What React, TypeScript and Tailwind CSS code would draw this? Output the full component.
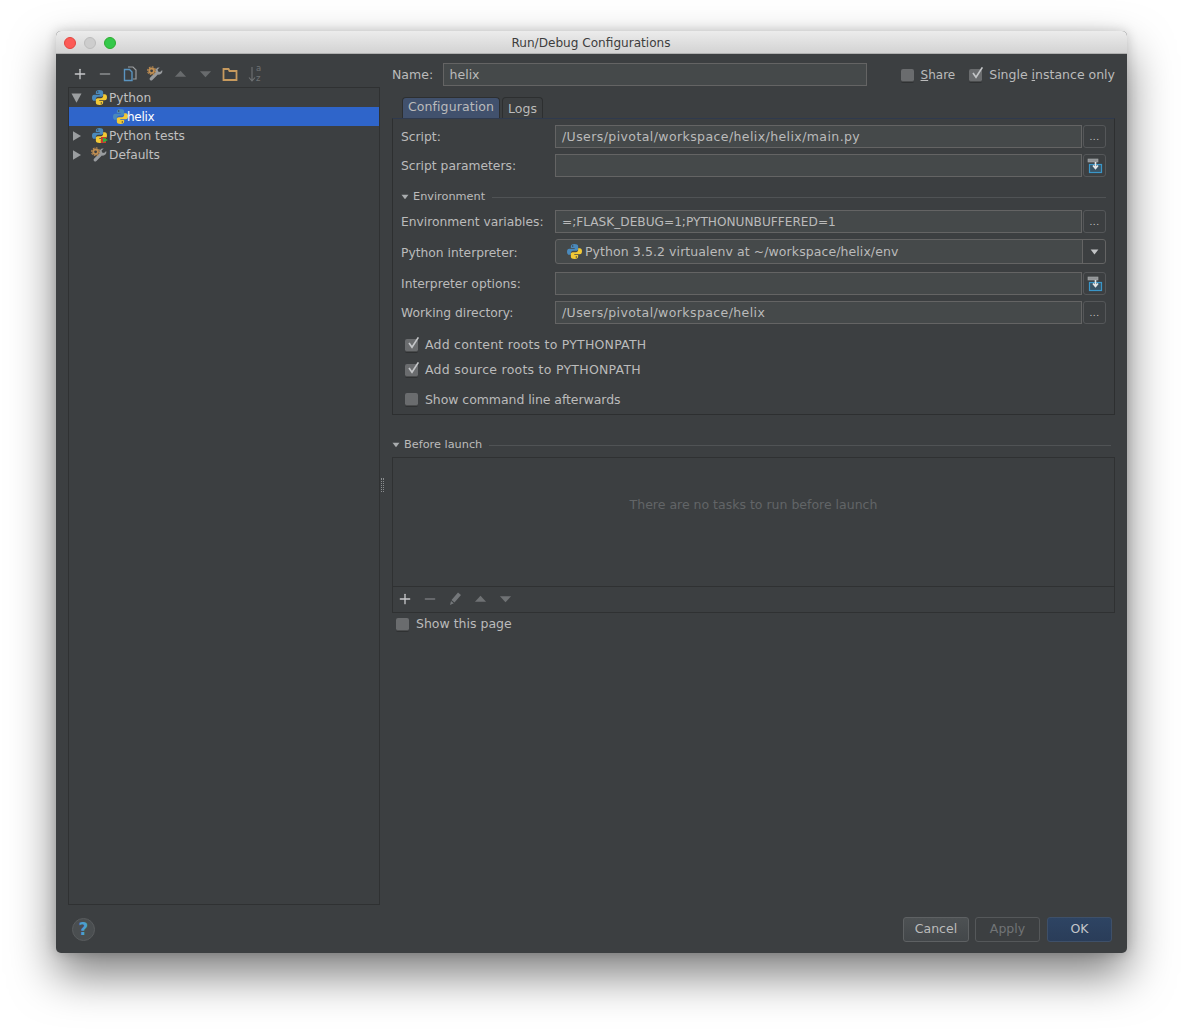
import type { ReactNode } from 'react'
import { Plus, Minus } from 'lucide-react'

const PythonIcon = ({ className = '' }: { className?: string }) => (
  <svg viewBox="1 1 14 14" className={`w-[15px] h-[15px] shrink-0 ${className}`}>
    <path
      d="M8 1C5.4 1 4.6 2 4.6 3.1v1.6h3.6v.7H3.1C1.7 5.4 1 6.4 1 8.2s.8 2.9 2.1 2.9h1.5V9.3c0-1.1.9-2 2-2h3c1.1 0 1.8-.7 1.8-1.7V3.1C11.400 1.800 10 1 8 1z"
      fill="#4a89bb"
    />
    <path
      d="M8 15c2.600 0 3.400-1 3.400-2.100v-1.600H7.800v-.7h5.100c1.400 0 2.100-1 2.100-2.800s-.8-2.900-2.100-2.900h-1.500v1.800c0 1.100-.9 2-2 2h-3c-1.100 0-1.800.7-1.800 1.700v2.500C4.600 14.200 6 15 8 15z"
      fill="#f2c935"
    />
    <circle cx="6.300" cy="2.900" r=".7" fill="#3c3f41" />
    <circle cx="9.700" cy="13.100" r=".7" fill="#3c3f41" />
  </svg>
)

const WrenchIcon = () => (
  <svg viewBox="0 0 16 16" className="w-4 h-4 shrink-0">
    <path d="M12 1.500a3.600 3.600 0 0 0-3.500 4.700L3 11.700a1.700 1.700 0 0 0 2.400 2.400l5.500-5.500a3.600 3.600 0 0 0 4.300-4.600l-2.100 2-2-.5-.5-2 2.100-2a3 3 0 0 0-.7-.05z" fill="#989b9e" />
    <circle cx="4.600" cy="4.800" r="3.300" fill="#c08e52" />
    <circle cx="4.600" cy="4.800" r="4" fill="none" stroke="#c08e52" strokeWidth="1.100" strokeDasharray="1.800 1.300" />
    <circle cx="4.600" cy="4.800" r="1.400" fill="#3c3f41" />
  </svg>
)

const TreeArrow = ({ open }: { open?: boolean }) => (
  <svg viewBox="0 0 11 10" className="w-[11px] h-[10px] shrink-0">
    {open ? <path d="M.5 .5h10L5.500 9.800z" fill="#9b9ea0" /> : <path d="M2 .3L10 5l-8 4.700z" fill="#9b9ea0" />}
  </svg>
)

const UpDown = ({ down, light }: { down?: boolean; light?: boolean }) => (
  <svg viewBox="0 0 14 8" className="w-[13px] h-2">
    <path d={down ? 'M1 1h12L7 7.500z' : 'M1 7h12L7 .5z'} fill={light ? '#6f7274' : '#686b6d'} />
  </svg>
)

const DisclosureDown = () => (
  <svg viewBox="0 0 8 6" className="w-2 h-[6px] shrink-0">
    <path d="M.5 .8h7L4 5.200z" fill="#a9acae" />
  </svg>
)

const Check = () => (
  <svg viewBox="0 0 16 16" className="absolute left-[1px] -top-[3px] w-[15px] h-[15px]">
    <path d="M3.200 7.500l3.200 4.400L13.200 1.500" fill="none" stroke="#c4c6c8" strokeWidth="1.800" />
  </svg>
)

const Checkbox = ({ checked, label, className = '' }: { checked?: boolean; label: ReactNode; className?: string }) => (
  <div className="flex items-center">
    <span className="relative w-[13px] h-[13px] rounded-[2px] bg-[#6a6c6e] border-b border-[#4a4c4d] shadow-[0_1px_0_#2f3132] shrink-0">
      {checked && <Check />}
    </span>
    <span className={`ml-[7px] whitespace-nowrap ${className}`}>{label}</span>
  </div>
)

const TextField = ({ value, className = '' }: { value?: string; className?: string }) => (
  <div className={`h-[23px] shrink-0 bg-[#45494a] border border-[#646464] pl-[6px] pt-[1px] flex items-center whitespace-nowrap ${className}`}>
    {value}
  </div>
)

const BrowseButton = () => (
  <div className="ml-[1px] w-[23px] h-[23px] shrink-0 border border-[#555759] rounded-[3px] flex items-center justify-center text-[#c8c8c8] text-[9px] tracking-[0.5px] leading-none pt-[2px]">
    ...
  </div>
)

const ExpandButton = () => (
  <div className="ml-[1px] w-[23px] h-[23px] shrink-0 border border-[#555759] rounded-[3px] flex items-center justify-center">
    <svg viewBox="0 0 16 16" className="w-4 h-4">
      <rect x="2.500" y="6.500" width="12" height="8" fill="#3b5566" stroke="#3a96c8" strokeWidth="1.200" />
      <rect x="1" y="1" width="10" height="3" fill="#8f9294" stroke="#a8abad" strokeWidth=".6" />
      <path d="M8.500 4v5.500M6 7.500l2.500 3 2.500-3" fill="none" stroke="#e4e6e7" strokeWidth="1.600" />
    </svg>
  </div>
)

const FormRow = ({ label, children, className = '', labelClassName = 'pt-[2px]' }: { label: string; children: ReactNode; className?: string; labelClassName?: string }) => (
  <div className={`flex items-center ${className}`}>
    <div className={`w-[154px] shrink-0 whitespace-nowrap text-[12.3px] ${labelClassName}`}>{label}</div>
    {children}
  </div>
)

const Section = ({ title, className = '' }: { title: string; className?: string }) => (
  <div className={`flex items-center ${className}`}>
    <DisclosureDown />
    <span className="ml-[4px] text-[11.300px] whitespace-nowrap">{title}</span>
    <div className="ml-[7px] flex-1 h-px bg-[#505355]" />
  </div>
)

const DialogButton = ({ children, className = '' }: { children: ReactNode; className?: string }) => (
  <div className={`h-[25px] rounded-[3px] border flex items-center justify-center ${className}`}>{children}</div>
)

const App = () => {
  return (
    <div className="w-[1183px] h-[1033px] bg-white pt-[31px] pl-[56px] overflow-hidden font-['DejaVu_Sans',sans-serif] text-[12.5px] text-[#bbbbbb]">
      <div className="w-[1071px] h-[922px] rounded-[5px] bg-[#3c3f41] flex flex-col overflow-hidden shadow-[0_22px_45px_rgba(0,0,0,0.5),0_0_12px_rgba(0,0,0,0.18)]">
        {/* Title bar */}
        <div className="relative h-[23px] shrink-0 flex items-center justify-center pt-[3px] pr-[1px] bg-gradient-to-b from-[#ececec] to-[#d3d3d3] border-b border-[#b0b0b0] text-[#3d3d3d] text-[12.100px]">
          <div className="absolute left-[8px] top-[6px] flex gap-[8px]">
            <span className="w-3 h-3 rounded-full bg-[#fc5b57] border border-[#e2463f]" />
            <span className="w-3 h-3 rounded-full bg-[#cdcdcd] border border-[#bcbcbc]" />
            <span className="w-3 h-3 rounded-full bg-[#34c84a] border border-[#2dac2f]" />
          </div>
          Run/Debug Configurations
        </div>

        <div className="flex-1 flex min-h-0">
          {/* Left side */}
          <div className="w-[324px] shrink-0 pl-[12px] flex flex-col">
            <div className="h-[33px] pl-[4px] pt-[12px] flex items-start gap-[9px] shrink-0">
              <Plus size={16} strokeWidth={2} className="text-[#c6c8ca]" />
              <Minus size={16} strokeWidth={2} className="text-[#8b8e90]" />
              <svg viewBox="0 0 16 16" className="w-4 h-4">
                <path d="M6 1h5l3 3v9h-3" fill="none" stroke="#9a9da0" strokeWidth="1.200" />
                <path d="M2.500 3.500h5l2.500 2.500v8.500H2.500z" fill="#3c3f41" stroke="#5a94c0" strokeWidth="1.400" />
              </svg>
              <WrenchIcon />
              <div className="w-4 h-4 flex items-center justify-center"><UpDown /></div>
              <div className="w-4 h-4 flex items-center justify-center"><UpDown down /></div>
              <svg viewBox="0 0 16 16" className="w-4 h-4">
                <path d="M1.500 3h5l1 2h7v9h-13z" fill="none" stroke="#c79a5e" strokeWidth="1.800" />
              </svg>
              <div className="relative w-4 h-4 text-[#6f7274]">
                <svg viewBox="0 0 8 16" className="absolute left-[1px] top-0 w-2 h-4">
                  <path d="M4 1v14M1 11.500l3 3.500 3-3.500" fill="none" stroke="#6f7274" strokeWidth="1.100" />
                </svg>
                <span className="absolute left-[9px] -top-[3px] text-[8.500px] leading-[10px]">a<br />z</span>
              </div>
            </div>

            <div className="w-[312px] h-[818px] border border-[#2f3132] shrink-0 text-[12.200px] text-[#c0c0c0]">
              <div className="h-[19px] flex items-center pl-[2px]">
                <TreeArrow open />
                <PythonIcon className="ml-[10px]" />
                <span className="ml-[2px] pt-[1px]">Python</span>
              </div>
              <div className="h-[19px] flex items-center pl-[44px] bg-[#2f65ca] text-white">
                <PythonIcon />
                <span className="-ml-[1px] pt-[1px] text-[12px] tracking-[-0.300px]">helix</span>
              </div>
              <div className="h-[19px] flex items-center pl-[2px]">
                <TreeArrow />
                <div className="relative ml-[10px] w-[15px] h-[15px]">
                  <PythonIcon />
                  <span className="absolute right-[1px] bottom-0 w-[5px] h-[6px] bg-[#cc3a2e]" />
                  <svg viewBox="0 0 6 6" className="absolute -right-[1px] bottom-0 w-[5px] h-[6px]"><path d="M0 0l6 3-6 3z" fill="#30b040" /></svg>
                </div>
                <span className="ml-[2px] pt-[1px]">Python tests</span>
              </div>
              <div className="h-[19px] flex items-center pl-[2px]">
                <TreeArrow />
                <div className="ml-[9px]"><WrenchIcon /></div>
                <span className="ml-[2px] pt-[1px]">Defaults</span>
              </div>
            </div>

            <div className="flex-1 pl-[4px] pt-[13px]">
              <div className="w-[23px] h-[23px] rounded-full bg-[#4a4e50] border border-[#595c5e] flex items-center justify-center text-[#4a9fd0] font-bold text-[17px] leading-none">
                ?
              </div>
            </div>
          </div>

          {/* Splitter */}
          <div className="w-[12px] shrink-0 flex flex-col items-start pl-[1px] pt-[424px]">
            <div className="w-[3px] h-[14px] border-x border-dotted border-[#8a8d8f]" />
          </div>

          {/* Right side */}
          <div className="w-[723px] shrink-0 flex flex-col">
            <div className="flex items-center h-[23px] mt-[9px] shrink-0">
              <span className="w-[51px] whitespace-nowrap pt-[2px]">Name:</span>
              <TextField value="helix" className="w-[424px] border-[#5d5f61]" />
              <div className="ml-[34px] pt-[1px]">
                <Checkbox label={<><span className="underline">S</span>hare</>} className="text-[12px]" />
              </div>
              <div className="ml-[14px] pt-[1px]">
                <Checkbox checked label={<>Single <span className="underline">i</span>nstance only</>} />
              </div>
            </div>

            <div className="flex items-end h-[32px] pl-[10px] gap-[2px] shrink-0">
              <div className="w-[98px] h-[21px] bg-[#41516d] border border-b-0 border-[#2d2f30] rounded-t-[4px] flex items-center justify-center pb-[1px] whitespace-nowrap tracking-[0.100px]">
                Configuration
              </div>
              <div className="w-[41px] h-[21px] bg-[#3c3f41] border border-b-0 border-[#2d2f30] rounded-t-[4px] flex items-center justify-center pt-[2px]">
                Logs
              </div>
            </div>

            <div className="h-[297px] border border-[#2d2f30] border-t-[#2f3a4e] pl-[8px] pr-[8px] pt-[6px] shrink-0">
              <FormRow label="Script:">
                <TextField value="/Users/pivotal/workspace/helix/helix/main.py" className="w-[527px] tracking-[0.410px]" />
                <BrowseButton />
              </FormRow>
              <FormRow label="Script parameters:" className="mt-[6px]">
                <TextField className="w-[527px]" />
                <ExpandButton />
              </FormRow>
              <Section title="Environment" className="mt-[13px] h-[14px]" />
              <FormRow label="Environment variables:" className="mt-[6px]">
                <TextField value="=;FLASK_DEBUG=1;PYTHONUNBUFFERED=1" className="w-[527px] text-[12.150px]" />
                <BrowseButton />
              </FormRow>
              <FormRow label="Python interpreter:" className="mt-[6px]" labelClassName="pt-[4px]">
                <div className="relative w-[551px] h-[25px] shrink-0 bg-[#45494a] border border-[#646464] rounded-[3px] flex items-center pl-[11px]">
                  <PythonIcon />
                  <span className="ml-[3px] pt-[1px] whitespace-nowrap tracking-[0.080px]">Python 3.5.2 virtualenv at ~/workspace/helix/env</span>
                  <div className="absolute right-0 top-0 bottom-0 w-[23px] border-l border-[#646464] bg-[#3c3f41] rounded-r-[3px] flex items-center justify-center">
                    <svg viewBox="0 0 10 7" className="w-[9px] h-[6px]"><path d="M.5.5h9L5 6.500z" fill="#c2c4c6" /></svg>
                  </div>
                </div>
              </FormRow>
              <FormRow label="Interpreter options:" className="mt-[8px]">
                <TextField className="w-[527px]" />
                <ExpandButton />
              </FormRow>
              <FormRow label="Working directory:" className="mt-[6px]">
                <TextField value="/Users/pivotal/workspace/helix" className="w-[527px] tracking-[0.400px]" />
                <BrowseButton />
              </FormRow>
              <div className="pl-[4px] mt-[12px]">
                <Checkbox checked label="Add content roots to PYTHONPATH" className="tracking-[0.220px]" />
              </div>
              <div className="pl-[4px] mt-[6px]">
                <Checkbox checked label="Add source roots to PYTHONPATH" className="tracking-[0.260px]" />
              </div>
              <div className="pl-[4px] mt-[11px]">
                <Checkbox label="Show command line afterwards" className="tracking-[-0.070px]" />
              </div>
            </div>

            <Section title="Before launch" className="mt-[23px] h-[14px] pr-[4px]" />

            <div className="mt-[5px] h-[156px] border border-[#2f3132] flex flex-col shrink-0">
              <div className="flex-1 flex items-center justify-center pb-[34px] text-[#626567] whitespace-nowrap">
                There are no tasks to run before launch
              </div>
              <div className="h-[26px] border-t border-[#2f3132] flex items-center pl-[4px] pb-[2px] gap-[9px] shrink-0">
                <Plus size={16} strokeWidth={2} className="text-[#c6c8ca]" />
                <Minus size={16} strokeWidth={2} className="text-[#74777a]" />
                <svg viewBox="0 0 16 16" className="w-4 h-4">
                  <path d="M11 1.500l3 2.500-6.500 7.500-3-2.500zM4 10l2.800 2.300-3.800 1.700z" fill="#74777a" />
                </svg>
                <div className="w-4 h-4 flex items-center justify-center"><UpDown light /></div>
                <div className="w-4 h-4 flex items-center justify-center"><UpDown down light /></div>
              </div>
            </div>

            <div className="pl-[4px] mt-[2px]">
              <Checkbox label="Show this page" />
            </div>

            <div className="mt-auto mb-[11px] pr-[3px] flex justify-end">
              <DialogButton className="w-[66px] bg-gradient-to-b from-[#4d5153] to-[#43474a] border-[#5e6163]">Cancel</DialogButton>
              <DialogButton className="ml-[6px] w-[65px] border-[#55585a] text-[#717476]">Apply</DialogButton>
              <DialogButton className="ml-[7px] w-[65px] bg-gradient-to-b from-[#2e4463] to-[#2a3d59] border-[#3e5069] text-[#c4c7ca]">OK</DialogButton>
            </div>
          </div>
        </div>
      </div>
    </div>
  )
}

export default App
